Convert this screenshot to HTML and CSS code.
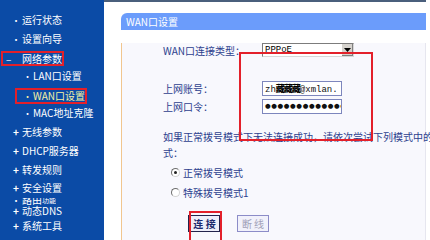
FILE: index.html
```html
<!DOCTYPE html>
<html lang="zh-CN">
<head>
    <meta charset="UTF-8">
    <title>WAN口设置</title>
    <link rel="stylesheet" href="styles.css">
</head>
<body>
    <div class="page">
        <div class="menu">
            <ul>
                <li><span class="mark dot">•</span>运行状态</li>
                <li><span class="mark dot">•</span>设置向导</li>
                <li class="open"><span class="hl"><span class="mark">–</span>网络参数</span></li>
                <li class="sub"><span class="mark dot">•</span>LAN口设置</li>
                <li class="sub active"><span class="hl"><span class="mark dot">•</span>WAN口设置</span></li>
                <li class="sub"><span class="mark dot">•</span>MAC地址克隆</li>
                <li><span class="mark plus">+</span>无线参数</li>
                <li><span class="mark plus">+</span>DHCP服务器</li>
                <li><span class="mark plus">+</span>转发规则</li>
                <li><span class="mark plus">+</span>安全设置</li>
                <li class="glitch">
                    <span class="ghost"><span class="ghost-in"><span class="mark dot">•</span>路由<small>功能</small></span></span>
                    <span class="mark plus">+</span>动态DNS
                </li>
                <li><span class="mark plus">+</span>系统工具</li>
            </ul>
        </div>

        <div class="main">
            <div class="panel">
                <div class="panel-title">WAN口设置</div>
                <div class="panel-body">
                    <div class="row first">
                        <label>WAN口连接类型：</label>
                        <div class="select">
                            <span class="val">PPPoE</span>
                            <span class="arrow"><svg width="7" height="4" viewBox="0 0 7 4"><path d="M0 0h7L3.5 4z" fill="#000"/></svg></span>
                        </div>
                    </div>
                    <div class="row account">
                        <label>上网账号：</label>
                        <div class="field">zh<span class="scribble">藏藏藏</span>@xmlan.</div>
                    </div>
                    <div class="row">
                        <label>上网口令：</label>
                        <div class="field pass">●●●●●●●●●●●●●</div>
                    </div>

                    <div class="note">
                        <div class="note-line">如果正常拨号模式下无法连接成功，请依次尝试下列模式中的一种连接方</div>
                        <div>式：</div>
                    </div>

                    <div class="radio-row"><span class="radio checked"></span>正常拨号模式</div>
                    <div class="radio-row"><span class="radio"></span>特殊拨号模式1</div>

                    <div class="buttons">
                        <span class="btn-wrap"><button class="btn">连 接</button></span>
                        <button class="btn off">断 线</button>
                    </div>

                    <!-- red mark round the account fields -->
                    <div class="hl-box"></div>
                </div>
            </div>
        </div>
    </div>
</body>
</html>
```

FILE: styles.css
```css
body {
    margin: 0;
    width: 430px;
    height: 240px;
    overflow: hidden;
    background-color: #fff;
    font-family: "Noto Sans CJK SC", "DejaVu Sans", sans-serif;
    font-size: 10px;
}

.page {
    display: flex;
    height: 240px;
}

/* left menu */
.menu {
    flex: none;
    width: 104px;
    background-color: #0b4ba6;
    color: #fff;
}

.menu ul {
    list-style: none;
    margin: 0;
    padding: 11px 0 0;
}

.menu li {
    position: relative;
    height: 18.7px;
    line-height: 18.7px;
    padding-left: 10px;
    white-space: nowrap;
    box-sizing: border-box;
}

.menu .mark {
    display: inline-block;
    width: 12px;
    text-align: center;
}

.menu .dot {
    font-size: 9px;
}

.menu .plus {
    font-weight: bold;
    font-size: 10px;
}

.menu li.sub {
    padding-left: 22px;
}

.menu li.sub .mark {
    width: 11px;
}

.hl {
    display: inline-block;
    line-height: 11px;
    border: 2px solid #e3202a;
    vertical-align: middle;
}

.menu li.open {
    padding-left: 1px;
}

.menu li.open .mark {
    width: 16px;
    padding-left: 3px;
    text-align: left;
}

.menu li.active {
    padding-left: 15px;
    color: #f4f1a4;
}

.menu li.active .hl {
    padding-left: 5px;
}

.menu li.glitch {
    padding-top: 6px;
    line-height: 14px;
}

.ghost {
    position: absolute;
    left: 10px;
    top: 0;
    height: 8px;
    overflow: hidden;
}

.ghost-in {
    display: block;
    margin-top: -5px;
    line-height: 14px;
}

.ghost small {
    font-size: 7px;
    vertical-align: top;
}

/* right side */
.main {
    flex: none;
    width: 322px;
    border-top: 2px solid #4a5f7c;
    padding: 11px 0 0 17px;
    box-sizing: border-box;
}

.panel-title {
    height: 17px;
    line-height: 17px;
    padding-left: 5px;
    background-color: #6b9cfb;
    border-top-left-radius: 6px;
    color: #fff;
}

.panel-body {
    position: relative;
    height: 220px;
    background-color: #f8f8fd;
    border-left: 1px solid #f1c68f;
    border-right: 1px solid #e6e6ef;
    color: #2d3f8e;
}

.row {
    display: flex;
    align-items: center;
    height: 15px;
    margin-top: 3px;
    padding-left: 41px;
}

.row.first {
    margin-top: 13px;
    height: 14px;
}

.row.account {
    margin-top: 24px;
}

.row label {
    width: 99px;
    flex: none;
}

.select {
    display: flex;
    width: 92px;
    height: 14px;
    border: 1px solid #7c7c7c;
    border-right-color: #d8d8d8;
    border-bottom-color: #d8d8d8;
    background-color: #fff;
    box-sizing: border-box;
}

.select .val {
    flex: 1;
    padding-left: 2px;
    font-family: "Liberation Mono", monospace;
    font-size: 9px;
    line-height: 12px;
    color: #000;
}

.select .arrow {
    display: flex;
    align-items: center;
    justify-content: center;
    width: 11px;
    background-color: #d6d3ce;
    border-left: 1px solid #fff;
    box-shadow: inset -1px -1px 0 #808080;
}

.field {
    width: 80px;
    height: 15px;
    padding-left: 2px;
    border: 1px solid #7d86bd;
    background-color: #fff;
    box-sizing: border-box;
    overflow: hidden;
    white-space: nowrap;
    font-family: "Liberation Mono", monospace;
    font-size: 9px;
    line-height: 13px;
    color: #111;
}

.scribble {
    font-family: "Noto Sans CJK SC", sans-serif;
    font-weight: 900;
    letter-spacing: -1px;
    color: #000;
}

.field.pass {
    font-family: "DejaVu Sans", sans-serif;
    font-size: 6.5px;
    letter-spacing: 0.6px;
}

.note {
    margin-top: 15px;
    padding-left: 41px;
    line-height: 16px;
    white-space: nowrap;
}

.radio-row {
    display: flex;
    align-items: center;
    height: 20px;
    padding-left: 49px;
}

.radio-row:first-of-type,
.note + .radio-row {
    margin-top: 1px;
}

.radio {
    position: relative;
    width: 7px;
    height: 7px;
    margin-right: 3px;
    border: 1px solid #6f6f6f;
    border-right-color: #d4d4d4;
    border-bottom-color: #d4d4d4;
    border-radius: 50%;
    background-color: #fff;
}

.radio.checked::after {
    content: "";
    position: absolute;
    left: 2px;
    top: 2px;
    width: 3px;
    height: 3px;
    border-radius: 50%;
    background-color: #222;
}

.buttons {
    display: flex;
    gap: 16px;
    margin-top: 13px;
    padding-left: 66px;
}

.btn-wrap {
    position: relative;
}

.btn-wrap::after {
    content: "";
    position: absolute;
    left: 1px;
    top: -4px;
    width: 29px;
    height: 28px;
    border: 2px solid #e3202a;
}

.btn {
    width: 33px;
    height: 17px;
    padding: 0;
    border: 2px solid #23234c;
    border-top-width: 1px;
    border-bottom-width: 1px;
    background-color: #eeeef9;
    font-family: "Noto Sans CJK SC", sans-serif;
    font-size: 10px;
    font-weight: bold;
    color: #1c2a6e;
}

.btn.off {
    width: 32px;
    border: 1px solid #8c8cc8;
    background-color: #f1f1fb;
    font-weight: normal;
    color: #a0a0b8;
}

.hl-box {
    position: absolute;
    left: 117px;
    top: 9px;
    width: 130px;
    height: 85px;
    border: 2px solid #e3202a;
}
```
